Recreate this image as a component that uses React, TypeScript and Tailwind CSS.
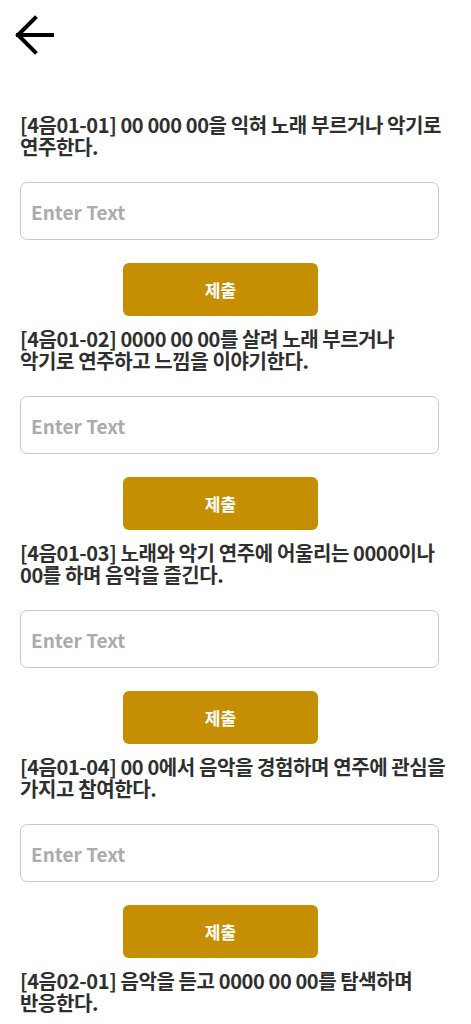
import { useState } from 'react';

const items = [
  '[4음01-01] 00 000 00을 익혀 노래 부르거나 악기로 연주한다.',
  '[4음01-02] 0000 00 00를 살려 노래 부르거나 악기로 연주하고 느낌을 이야기한다.',
  '[4음01-03] 노래와 악기 연주에 어울리는 0000이나 00를 하며 음악을 즐긴다.',
  '[4음01-04] 00 0에서 음악을 경험하며 연주에 관심을 가지고 참여한다.',
  '[4음02-01] 음악을 듣고 0000 00 00를 탐색하며 반응한다.',
];

const font = { fontFamily: '"Noto Sans CJK KR", "Noto Sans", sans-serif' };

const Entry = ({ label }: { label: string }) => {
  const [value, setValue] = useState('');
  return (
    <div className="flex flex-col">
      <p className="text-[20px] leading-[22px] font-bold text-[#2f2f2f] tracking-[-0.4px] break-keep">{label}</p>
      <input
        value={value}
        onChange={(e) => setValue(e.target.value)}
        placeholder="Enter Text"
        className="mt-[24px] mr-3 h-[58px] rounded-[7px] border-[1.5px] border-[#c9c9c9] px-[10px] text-[19px] font-semibold text-[#333] placeholder:text-[#ababab] outline-none"
      />
      <button className="mt-[23px] ml-[103px] h-[53px] w-[195px] rounded-[6px] bg-[#c68f03] text-[17px] font-bold text-white">
        제출
      </button>
    </div>
  );
};

export default function App() {
  return (
    <div className="w-full bg-white" style={font}>
      <div className="pl-[14px] pt-[13px]">
        <svg width="42" height="44" viewBox="0 0 42 44" fill="none" stroke="#000" strokeWidth="4" strokeLinecap="square">
          <path d="M4 22H38" />
          <path d="M21 5L4 22L21 39" strokeLinejoin="miter" />
        </svg>
      </div>
      <div className="flex flex-col gap-[12px] px-5 pt-[57px]">
        {items.map((t) => (
          <Entry key={t} label={t} />
        ))}
      </div>
    </div>
  );
}
